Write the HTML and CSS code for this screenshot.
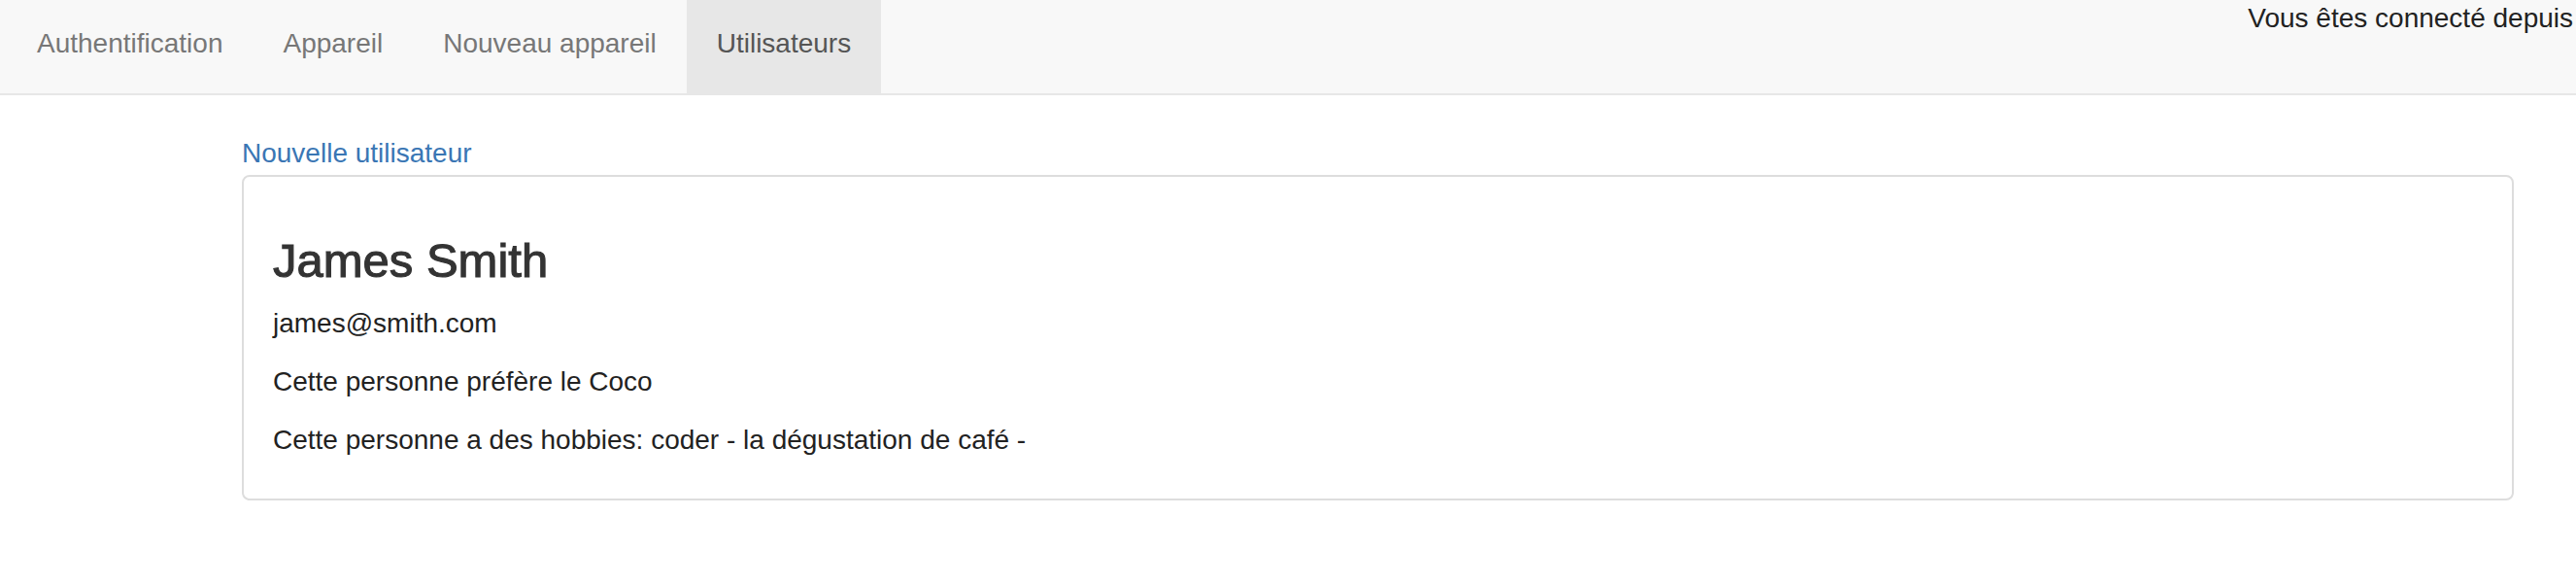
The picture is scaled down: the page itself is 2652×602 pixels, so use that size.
FILE: index.html
```html
<!DOCTYPE html>
<html lang="fr">
<head>
<meta charset="utf-8">
<title>Utilisateurs</title>
<link rel="stylesheet" href="styles.css">
</head>
<body>
<header class="navbar">
  <ul class="nav">
    <li><a class="nav-link" href="#">Authentification</a></li>
    <li><a class="nav-link" href="#">Appareil</a></li>
    <li><a class="nav-link" href="#">Nouveau appareil</a></li>
    <li><a class="nav-link active" href="#">Utilisateurs</a></li>
  </ul>
  <div class="status">Vous êtes connecté depuis</div>
</header>
<main class="content">
  <a class="new-link" href="#">Nouvelle utilisateur</a>
  <section class="panel">
    <h3 class="name">James Smith</h3>
    <p class="line">james@smith.com</p>
    <p class="line">Cette personne préfère le Coco</p>
    <p class="line">Cette personne a des hobbies: coder - la dégustation de café -</p>
  </section>
</main>
</body>
</html>
```
FILE: styles.css
```css
html, body {
  margin: 0;
  padding: 0;
  background: #fff;
}
body {
  font-family: "Liberation Sans", Arial, sans-serif;
  font-size: 28px;
  line-height: 40px;
  color: #333;
}
.navbar {
  display: flex;
  justify-content: space-between;
  align-items: flex-start;
  height: 96px;
  background: #f8f8f8;
  border-bottom: 2px solid #e7e7e7;
  padding-left: 7px;
}
.nav {
  display: flex;
  list-style: none;
  margin: 0;
  padding: 0;
}
.nav-link {
  display: block;
  padding: 25px 31px 31px;
  color: #777;
  text-decoration: none;
  line-height: 40px;
}
.nav-link.active {
  background: #e7e7e7;
  color: #555;
}
.status {
  margin-right: 3px;
  line-height: 38px;
  color: #222;
}
.content {
  padding: 40px 64px 0 249px;
}
.new-link {
  display: block;
  color: #3a76b4;
  text-decoration: none;
  line-height: 40px;
  margin-bottom: 2px;
}
.panel {
  border: 2px solid #ddd;
  border-radius: 8px;
  padding: 30px;
  background: #fff;
}
.name {
  margin: 30px 0 17px;
  font-size: 49px;
  line-height: 1.1;
  font-weight: 400;
  -webkit-text-stroke: 1.1px #333;
  color: #333;
}
.line {
  margin: 0 0 20px;
  color: #222;
}
.line:last-child {
  margin-bottom: 10px;
}
```
